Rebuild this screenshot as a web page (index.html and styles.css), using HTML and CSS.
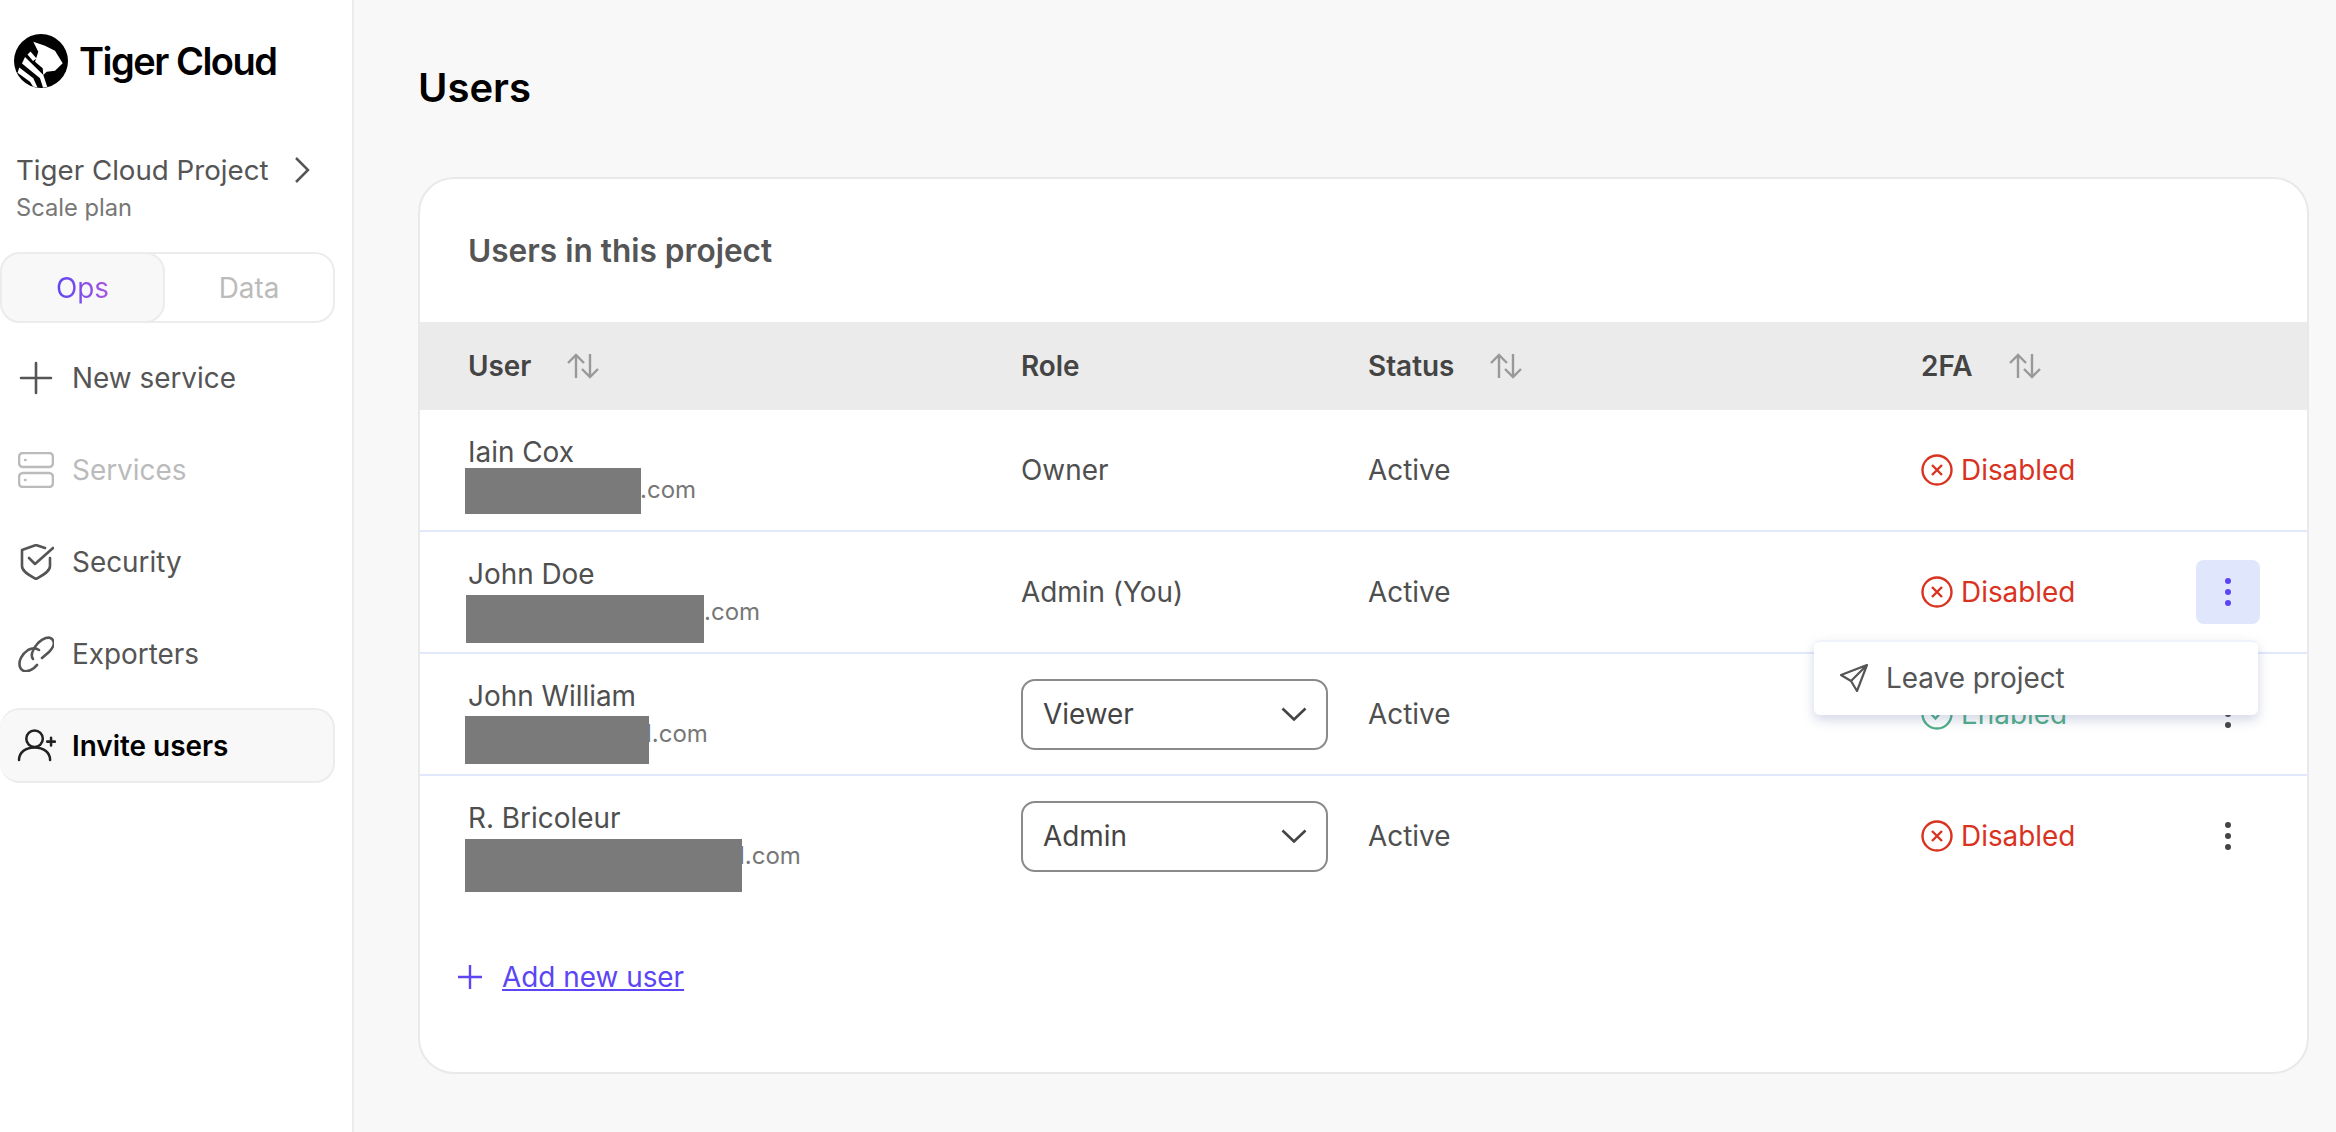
FILE: index.html
```html
<!DOCTYPE html>
<html lang="en">
<head>
<meta charset="utf-8">
<title>Users - Tiger Cloud</title>
<link rel="stylesheet" href="styles.css">
</head>
<body>
<div class="app">
  <aside class="sidebar">
    <div class="logo">
      <svg class="logo-mark" viewBox="0 0 54 54"><circle cx="27" cy="27" r="27" fill="#000"/><path d="M19.300 7.700L31 11.700 41 16.700 48.700 29.300 41 36.700 32.700 37.700 29.300 41 28.700 34.300 21 27.700 24.300 17.700Z" fill="#fff"/><path d="M16.500 17.500L22.500 24.500 19 27 13.500 20.500ZM11 23L29.300 41 33.300 53 29 53.500 26 44.300 8 29.500ZM5.300 33.500L19.300 44.300 23.500 53.500 19 52.500 16 47.700 3.500 38.700Z" fill="#fff"/></svg>
      <span class="logo-text">Tiger Cloud</span>
    </div>
    <div class="project">
      <div class="project-row">
        <span class="project-name">Tiger Cloud Project</span>
        <svg class="project-chevron" viewBox="0 0 16 28"><path d="M2 2l12 12L2 26" /></svg>
      </div>
      <div class="project-plan">Scale plan</div>
    </div>
    <div class="tabs">
      <div class="tab tab-active"><span class="tab-grad">Ops</span></div>
      <div class="tab tab-off">Data</div>
    </div>
    <nav class="nav">
      <a class="nav-item">
        <svg class="nav-icon" viewBox="0 0 36 36"><path d="M18 3v30M3 18h30"/></svg>
        <span>New service</span>
      </a>
      <a class="nav-item nav-disabled">
        <svg class="nav-icon" viewBox="0 0 36 36"><rect x="1" y="1" width="34" height="14" rx="4"/><rect x="1" y="21" width="34" height="14" rx="4"/><path d="M7 8h.5M7 28h.5"/></svg>
        <span>Services</span>
      </a>
      <a class="nav-item">
        <svg class="nav-icon" viewBox="0 0 36 36"><path d="M27 4L18 1 4 6v16c0 6 9 10 14 13 5-3 14-7 14-13v-8"/><path d="M11 14l6 6L35 4"/></svg>
        <span>Security</span>
      </a>
      <a class="nav-item nav-before-current">
        <svg class="nav-icon" viewBox="0 0 36 36"><path d="M15 23C12 19 15 13 20 7c5-5 11-7 14-4s2 8-3 13l-7 6"/><path d="M21 14c-3-2-7-2-11 0C4 18 0 25 2 31s9 5 14 1l3-3"/></svg>
        <span>Exporters</span>
      </a>
      <a class="nav-item nav-current">
        <svg class="nav-icon nav-icon-wide" viewBox="0 0 40 34"><circle cx="18" cy="10" r="8.500"/><path d="M2 32c0-8 7-13 16-13s16 5 16 13"/><path d="M31 13h8M35 9v8"/></svg>
        <span>Invite users</span>
      </a>
    </nav>
  </aside>
  <main class="main">
    <h1 class="page-title">Users</h1>
    <section class="card">
      <h2 class="card-title">Users in this project</h2>
      <div class="row head">
        <div class="head-cell">User<svg class="sort" viewBox="0 0 34 26"><path d="M10 25V2M2 10l8-8 8 8M24 1v23M16 16l8 8 8-8"/></svg></div>
        <div class="head-cell">Role</div>
        <div class="head-cell">Status<svg class="sort" viewBox="0 0 34 26"><path d="M10 25V2M2 10l8-8 8 8M24 1v23M16 16l8 8 8-8"/></svg></div>
        <div class="head-cell">2FA<svg class="sort" viewBox="0 0 34 26"><path d="M10 25V2M2 10l8-8 8 8M24 1v23M16 16l8 8 8-8"/></svg></div>
      </div>

      <div class="row body-row">
        <div class="user">
          <div class="name">Iain Cox</div>
          <div class="email"><span class="redact r1"></span><span>.com</span></div>
        </div>
        <div>Owner</div>
        <div>Active</div>
        <div class="fa fa-off"><svg class="fa-icon" viewBox="0 0 32 32"><circle cx="16" cy="16" r="14.500"/><path d="M11 11l10 10M21 11L11 21"/></svg>Disabled</div>
      </div>

      <div class="row body-row">
        <div class="user">
          <div class="name">John Doe</div>
          <div class="email"><span class="redact r2"></span><span>.com</span></div>
        </div>
        <div>Admin (You)</div>
        <div>Active</div>
        <div class="fa fa-off"><svg class="fa-icon" viewBox="0 0 32 32"><circle cx="16" cy="16" r="14.500"/><path d="M11 11l10 10M21 11L11 21"/></svg>Disabled</div>
        <button class="kebab kebab-open"><i></i><i></i><i></i></button>
        <div class="menu">
          <svg class="menu-icon" viewBox="0 0 28 28"><path d="M27 1L1 11l10 6 6 10zM27 1L11 17"/></svg>
          <span>Leave project</span>
        </div>
      </div>

      <div class="row body-row">
        <div class="user">
          <div class="name">John William</div>
          <div class="email"><span class="redact r3"></span><span>l.com</span></div>
        </div>
        <div class="select"><span>Viewer</span><svg class="select-chevron" viewBox="0 0 26 14"><path d="M1.500 1.500L13 12.500 24.500 1.500"/></svg></div>
        <div>Active</div>
        <div class="fa fa-on"><svg class="fa-icon" viewBox="0 0 32 32"><circle cx="16" cy="16" r="14.500"/><path d="M10 16l4.500 4.500L22 12"/></svg>Enabled</div>
        <button class="kebab"><i></i><i></i><i></i></button>
      </div>

      <div class="row body-row last">
        <div class="user">
          <div class="name">R. Bricoleur</div>
          <div class="email"><span class="redact r4"></span><span>l.com</span></div>
        </div>
        <div class="select"><span>Admin</span><svg class="select-chevron" viewBox="0 0 26 14"><path d="M1.500 1.500L13 12.500 24.500 1.500"/></svg></div>
        <div>Active</div>
        <div class="fa fa-off"><svg class="fa-icon" viewBox="0 0 32 32"><circle cx="16" cy="16" r="14.500"/><path d="M11 11l10 10M21 11L11 21"/></svg>Disabled</div>
        <button class="kebab"><i></i><i></i><i></i></button>
      </div>

      <div class="add-user">
        <svg class="add-icon" viewBox="0 0 26 26"><path d="M13 1v24M1 13h24"/></svg>
        <a class="add-link">Add new user</a>
      </div>
    </section>
  </main>
</div>
</body>
</html>
```
FILE: styles.css
```css
* { box-sizing: border-box; }
html, body { margin: 0; height: 100%; }
body {
  font-family: Inter, "Liberation Sans", sans-serif;
  font-size: 27.9px;
  color: #4f4f4f;
  background: #f8f8f8;
  overflow: hidden;
}
.app { display: flex; height: 1132px; }

/* sidebar */
.sidebar {
  flex: 0 0 354px;
  background: #fff;
  border-right: 2px solid #ececec;
  padding-top: 34px;
  padding-right: 17px;
}
.logo { display: flex; align-items: center; gap: 11px; padding-left: 14px; height: 54px; }
.logo-mark { width: 54px; height: 54px; flex: none; }
.logo-text { font-size: 38px; font-weight: 600; color: #000; letter-spacing: -1.5px; }
.project { margin-top: 66px; padding-left: 16px; }
.project-row { display: flex; align-items: center; height: 32px; }
.project-name { color: #555; font-size: 27.7px; line-height: 32px; }
.project-chevron { width: 16px; height: 28px; margin-left: 25px; fill: none; stroke: #555; stroke-width: 2.5px; }
.project-plan { font-size: 23.7px; line-height: 30px; color: #777; margin-top: 7px; }
.tabs {
  display: flex;
  height: 71px;
  margin-top: 29px;
  border: 2px solid #ececec;
  border-left: 0;
  border-radius: 20px;
}
.tab { display: flex; align-items: center; justify-content: center; font-size: 27.9px; }
.tab-active {
  width: 165px;
  margin: -2px 0;
  background: #f8f8f8;
  border: 2px solid #ececec;
  border-radius: 20px;
}
.tab-grad {
  background: linear-gradient(90deg, #5c45f5, #a855e0);
  -webkit-background-clip: text;
  background-clip: text;
  color: transparent;
}
.tab-off { flex: 1; color: #bbb; }
.nav { display: flex; flex-direction: column; margin-top: 18px; }
.nav-item { display: flex; align-items: center; gap: 18px; height: 74px; margin-bottom: 18px; padding-left: 18px; color: #555; }
.nav-before-current { margin-bottom: 17px; }
.nav-icon { width: 36px; height: 36px; flex: none; fill: none; stroke: currentColor; stroke-width: 2.6px; stroke-linecap: round; stroke-linejoin: round; }
.nav-disabled { color: #bbb; }
.nav-current {
  color: #000;
  font-weight: 600;
  background: #f8f8f8;
  border: 2px solid #ececec;
  border-left: 0;
  border-radius: 20px;
  padding-left: 17px;
  gap: 16px;
  height: 75px;
}
.nav-icon-wide { width: 39px; height: 33px; stroke: #222; }

/* main */
.main { flex: 1; min-width: 0; padding: 0 27px 0 64px; }
.page-title { margin: 0; padding-top: 63px; font-size: 40px; line-height: 50px; font-weight: 600; color: #000; }
.card {
  margin-top: 64px;
  height: 897px;
  background: #fff;
  border: 2px solid #e9e9e9;
  border-radius: 36px;
}
.card-title { margin: 0; padding: 52px 0 0 48px; height: 143px; font-size: 31.6px; line-height: 40px; font-weight: 600; color: #555; }
.row {
  position: relative;
  display: grid;
  grid-template-columns: 553px 347px 553px 1fr;
  align-items: center;
  padding-left: 48px;
}
.head { height: 88px; background: #ebebeb; }
.head-cell { display: flex; align-items: center; gap: 35px; font-weight: 600; color: #444; }
.sort { width: 34px; height: 26px; flex: none; fill: none; stroke: #999; stroke-width: 2.4px; }
.body-row { height: 122px; border-bottom: 2px solid #e1e8fb; }
.last { height: 120px; border-bottom: 0; }
.user { align-self: start; padding-top: 26px; }
.name { line-height: 32px; }
.email { display: flex; align-items: center; height: 30px; margin-top: 7px; font-size: 24px; line-height: 30px; color: #777; }
.redact { position: relative; z-index: 1; flex: none; height: 46px; margin-left: -3px; background: #7a7a7a; }
.r1 { top: 1px; width: 176px; margin-right: -1px; }
.r2 { top: 7px; width: 238px; height: 48px; margin-left: -2px; }
.r3 { top: 6px; width: 184px; height: 48px; margin-right: -3px; }
.r4 { top: 9px; width: 277px; height: 53px; margin-right: -3px; }
.select {
  display: flex;
  align-items: center;
  justify-content: space-between;
  width: 307px;
  height: 71px;
  padding: 0 19px 0 20px;
  border: 2px solid #8a8a8a;
  border-radius: 14px;
  color: #444;
}
.select-chevron { width: 26px; height: 14px; fill: none; stroke: #444; stroke-width: 2.6px; }
.fa { display: flex; align-items: center; gap: 8px; }
.fa-icon { width: 32px; height: 32px; flex: none; fill: none; stroke: currentColor; stroke-width: 2.4px; }
.fa-off { color: #d9331f; }
.fa-on { color: #4fae86; }
.kebab {
  position: absolute;
  top: 28px;
  right: 47px;
  display: flex;
  flex-direction: column;
  align-items: center;
  justify-content: center;
  gap: 5px;
  width: 64px;
  height: 64px;
  padding: 0;
  border: 0;
  border-radius: 8px;
  background: transparent;
}
.kebab i { width: 6px; height: 6px; border-radius: 50%; background: #444; }
.kebab-open { background: #e0e6fb; }
.kebab-open i { background: #5c45f5; }
.menu {
  position: absolute;
  z-index: 2;
  top: 108px;
  right: 49px;
  display: flex;
  align-items: center;
  gap: 18px;
  width: 444px;
  height: 75px;
  padding: 0 0 2px 26px;
  background: #fff;
  border-top: 2px solid #f0f2fc;
  border-radius: 6px;
  box-shadow: 0 5px 12px rgba(90, 100, 160, .26);
  color: #555;
}
.menu-icon { width: 28px; height: 28px; flex: none; fill: none; stroke: #555; stroke-width: 2.2px; stroke-linejoin: round; }
.add-user { display: flex; align-items: center; gap: 19px; margin-top: 64px; padding-left: 37px; color: #5b45f5; }
.add-icon { width: 26px; height: 26px; fill: none; stroke: currentColor; stroke-width: 2.4px; }
.add-link { text-decoration: underline; }
```
